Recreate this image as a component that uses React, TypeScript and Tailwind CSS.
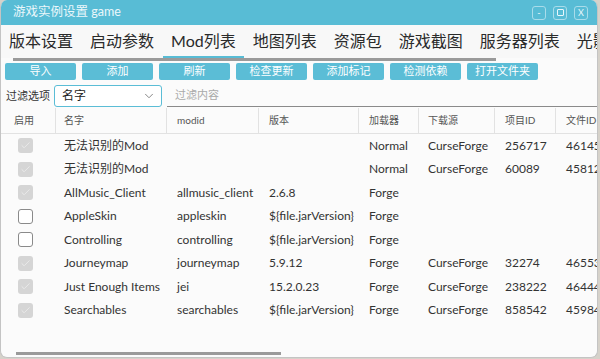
import { ChevronDown, Check } from "lucide-react";

const TABS = ["版本设置", "启动参数", "Mod列表", "地图列表", "资源包", "游戏截图", "服务器列表", "光影"];
const BUTTONS = ["导入", "添加", "刷新", "检查更新", "添加标记", "检测依赖", "打开文件夹"];

const COLS = [
  { label: "启用", w: "w-[55px]", pl: "pl-[13px]" },
  { label: "名字", w: "w-[111px]", pl: "pl-[8px]" },
  { label: "modid", w: "w-[92px]", pl: "pl-[10px]" },
  { label: "版本", w: "w-[100px]", pl: "pl-[10px]" },
  { label: "加载器", w: "w-[60px]", pl: "pl-[10px]" },
  { label: "下载源", w: "w-[76px]", pl: "pl-[9px]" },
  { label: "项目ID", w: "w-[61px]", pl: "pl-[10px]" },
  { label: "文件ID", w: "w-[60px]", pl: "pl-[10px]" },
];

const MODS = [
  { on: true, name: "无法识别的Mod", modid: "", ver: "", loader: "Normal", src: "CurseForge", pid: "256717", fid: "4614554" },
  { on: true, name: "无法识别的Mod", modid: "", ver: "", loader: "Normal", src: "CurseForge", pid: "60089", fid: "4581243" },
  { on: true, name: "AllMusic_Client", modid: "allmusic_client", ver: "2.6.8", loader: "Forge", src: "", pid: "", fid: "" },
  { on: false, name: "AppleSkin", modid: "appleskin", ver: "${file.jarVersion}", loader: "Forge", src: "", pid: "", fid: "" },
  { on: false, name: "Controlling", modid: "controlling", ver: "${file.jarVersion}", loader: "Forge", src: "", pid: "", fid: "" },
  { on: true, name: "Journeymap", modid: "journeymap", ver: "5.9.12", loader: "Forge", src: "CurseForge", pid: "32274", fid: "4655315" },
  { on: true, name: "Just Enough Items", modid: "jei", ver: "15.2.0.23", loader: "Forge", src: "CurseForge", pid: "238222", fid: "4644477" },
  { on: true, name: "Searchables", modid: "searchables", ver: "${file.jarVersion}", loader: "Forge", src: "CurseForge", pid: "858542", fid: "4598424" },
];

function App() {
  return (
    <div className="w-[600px] h-[359px] bg-[#d6d2ca] overflow-hidden font-[Lato,'Noto_Sans_CJK_SC',sans-serif]">
      <div className="w-[598px] h-[358px] rounded-[7px] bg-[#fbfbfb] border-l border-r border-b border-[#c4c4c4] overflow-hidden flex flex-col">
        {/* title bar */}
        <div className="h-[25px] shrink-0 bg-[#58bcd5] flex items-center justify-between pl-[12px] pr-[9px]">
          <span className="text-[12.5px] text-[#eaf7fb] leading-none">游戏实例设置 game</span>
          <div className="flex gap-[7px]">
            {["-", "▢", "X"].map((b) => (
              <div
                key={b}
                className="w-[14px] h-[14px] rounded-[3px] border border-[#a9dcea] flex items-center justify-center text-[9px] leading-none text-[#eaf7fb]"
              >
                {b === "▢" ? <div className="w-[7px] h-[7px] border border-[#eaf7fb] rounded-[1px]" /> : b}
              </div>
            ))}
          </div>
        </div>

        {/* tabs */}
        <div className="h-[33px] shrink-0 flex bg-[#f8f8f8] whitespace-nowrap overflow-hidden">
          {TABS.map((t) => (
            <div
              key={t}
              className={`px-[8px] mr-[1px] pt-[4px] text-[16px] text-[#2a2a2a] border-b-2 ${
                t === "Mod列表" ? "border-[#58bcd5]" : "border-transparent"
              }`}
            >
              {t}
            </div>
          ))}
        </div>
        <div className="h-[3px] w-[483px] ml-[12px] bg-[#9a9a9a] shrink-0" />

        {/* buttons */}
        <div className="flex gap-[6px] pl-[4px] mt-[2px] shrink-0">
          {BUTTONS.map((b) => (
            <div
              key={b}
              className="w-[71px] h-[17px] rounded-[2px] bg-[#5bbdd6] text-white text-[11px] flex items-center justify-center"
            >
              {b}
            </div>
          ))}
        </div>

        {/* filter row */}
        <div className="flex items-center mt-[5px] h-[22px] shrink-0">
          <span className="pl-[5px] w-[53px] text-[11px] text-[#333]">过滤选项</span>
          <div className="w-[108px] h-[22px] rounded-[3px] border-[1.5px] border-[#5bbdd6] bg-white flex items-center justify-between pl-[7px] pr-[5px]">
            <span className="text-[12px] text-[#222]">名字</span>
            <ChevronDown size={14} strokeWidth={1.5} className="text-[#777]" />
          </div>
          <div className="ml-[5px] flex-1 h-[22px] border-b border-[#8a8a8a] flex items-center pl-[8px] text-[11px] text-[#aaa]">
            过滤内容
          </div>
        </div>

        {/* table header */}
        <div className="flex h-[26px] mt-[1px] border-b border-[#e2e2e2] shrink-0 whitespace-nowrap">
          {COLS.map((c, i) => (
            <div
              key={c.label}
              className={`${c.w} ${c.pl} shrink-0 flex items-center text-[10px] text-[#555] ${
                i < COLS.length - 1 ? "border-r border-[#e2e2e2]" : ""
              }`}
            >
              {c.label}
            </div>
          ))}
        </div>

        {/* rows */}
        <div className="flex-1">
          {MODS.map((m, i) => (
            <div key={i} className="flex h-[23.5px] items-center text-[12px] text-[#333] whitespace-nowrap">
              <div className="w-[55px] shrink-0 pl-[17px]">
                {m.on ? (
                  <div className="w-[15px] h-[15px] rounded-[3px] bg-[#d5d5d5] flex items-center justify-center">
                    <Check size={11} strokeWidth={1.5} className="text-[#f4f4f4]" />
                  </div>
                ) : (
                  <div className="w-[15px] h-[15px] rounded-[3px] border border-[#8a8a8a] bg-white" />
                )}
              </div>
              <div className="w-[111px] shrink-0 pl-[8px]">{m.name}</div>
              <div className="w-[92px] shrink-0 pl-[10px]">{m.modid}</div>
              <div className="w-[100px] shrink-0 pl-[10px]">{m.ver}</div>
              <div className="w-[60px] shrink-0 pl-[10px]">{m.loader}</div>
              <div className="w-[76px] shrink-0 pl-[9px]">{m.src}</div>
              <div className="w-[61px] shrink-0 pl-[10px]">{m.pid}</div>
              <div className="w-[43px] shrink-0 pl-[10px] overflow-hidden">{m.fid}</div>
            </div>
          ))}
        </div>

        <div className="h-[3px] w-[265px] ml-[15px] mb-[2px] bg-[#9a9a9a] shrink-0" />
      </div>
    </div>
  );
}

export default App;
